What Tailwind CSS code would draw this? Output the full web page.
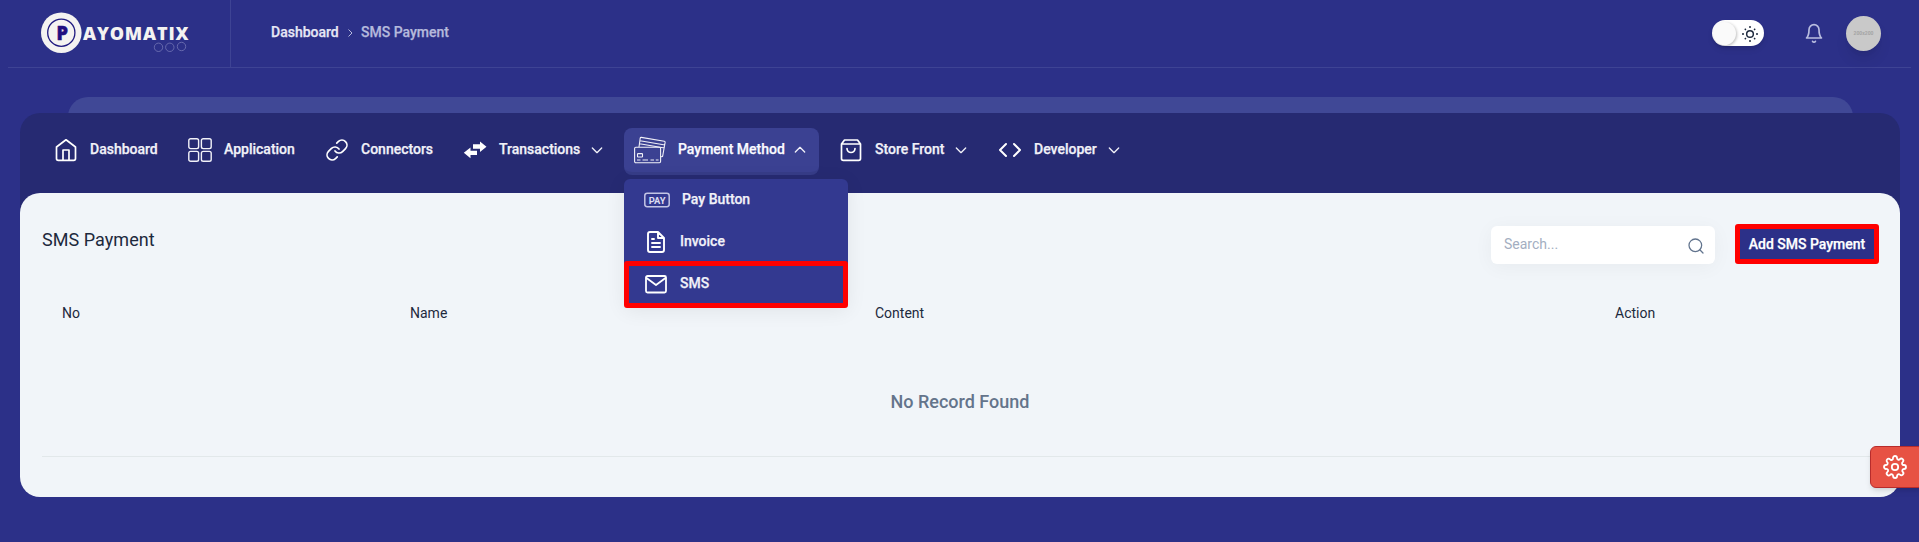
<!DOCTYPE html>
<html lang="en">
<head>
<meta charset="utf-8">
<title>SMS Payment</title>
<script src="https://cdn.jsdelivr.net/npm/@tailwindcss/browser@4"></script>
</head>
<body class="h-[542px] overflow-hidden bg-[#2c3088] font-['Roboto',sans-serif] text-sm leading-5 text-slate-800">
<div class="relative h-[542px] w-[1919px] overflow-hidden">

  <header class="mx-2 flex h-[68px] border-b border-[#3e4394]">
    <div class="flex w-[223px] shrink-0 border-r border-[#3e4394] pl-[33px] pt-3">
      <svg class="h-[42px] w-[150px]" viewBox="0 0 150 42">
        <circle cx="20.3" cy="20.7" r="20.3" fill="#f4f3f1"/>
        <circle cx="20.3" cy="20.7" r="13.6" fill="none" stroke="#1f1a80" stroke-width="1.3"/>
        <text x="15.5" y="28" font-family="Open Sans, sans-serif" font-weight="800" font-size="19.5" fill="#1f0f80" stroke="#1f0f80" stroke-width=".5" textLength="11.5" lengthAdjust="spacingAndGlyphs">P</text>
        <text x="42" y="28" font-family="Open Sans, sans-serif" font-weight="800" font-size="18" fill="#f4f3f1" textLength="105.5" lengthAdjust="spacing">AYOMATIX</text>
        <g fill="none" stroke="#7376b5" stroke-width=".8"><circle cx="117.5" cy="35.3" r="4.2"/><circle cx="128.8" cy="35.3" r="4.2"/><circle cx="140.5" cy="34.5" r="4.2"/></g>
      </svg>
    </div>
    <nav class="flex h-[64px] items-center pl-10 font-medium text-[#b5b9dc] [-webkit-text-stroke:.25px]">
      <span class="w-[68px] whitespace-nowrap text-[#e6e7f5]">Dashboard</span>
      <svg class="mx-[5px] mt-[2px] size-3" viewBox="0 0 24 24" fill="none" stroke="currentColor" stroke-width="2"><path d="m9 19 7-7-7-7"/></svg>
      <span>SMS Payment</span>
    </nav>
    <div class="ml-auto flex h-[66px] items-center pr-[30px]">
      <div class="flex h-[26px] w-[52px] items-center rounded-full bg-white shadow-md">
        <span class="ml-px size-[23px] rounded-full bg-[#fafafa] shadow-[1px_1px_3px_#00000040]"></span>
        <svg class="ml-[6px] mt-[2px] size-4 text-slate-800" viewBox="0 0 24 24" fill="none" stroke="currentColor" stroke-width="2.2"><circle cx="12" cy="12" r="5"/><path d="M12 0v3M12 21v3M4.2 4.2l1.7 1.7M18.1 18.1l1.7 1.7M0 12h3M21 12h3M4.2 19.8l1.7-1.7M18.1 5.9l1.7-1.7"/></svg>
      </div>
      <svg class="ml-10 size-5 text-[#b9bde0]" viewBox="0 0 24 24" fill="none" stroke="currentColor" stroke-width="2" stroke-linecap="round" stroke-linejoin="round"><path d="M18 8A6 6 0 0 0 6 8c0 7-3 10-3 10h18s-3-3-3-10M13.73 22a2 2 0 0 1-3.46 0"/></svg>
      <div class="ml-[22px] flex size-[35px] items-center justify-center rounded-full bg-[#c9c9c9] text-[5px] font-bold text-[#a4a4a4] shadow-lg">200x200</div>
    </div>
  </header>

  <main class="pl-5 pr-[19px] pt-[29px]">
    <div class="mx-[47.5px] h-4 overflow-hidden"><div class="h-10 rounded-[20px] bg-[#404896]"></div></div>
    <section class="rounded-[20px] bg-[#262a72]">
      <nav class="flex h-20 items-start pl-[22px] pt-[15px] font-medium text-[#f1f1f8] [-webkit-text-stroke:.25px]">
        <a class="flex h-[47px] w-[134px] shrink-0 items-center pb-[3px] pl-3">
          <svg class="size-6 text-white" viewBox="0 0 24 24" fill="none" stroke="currentColor" stroke-width="1.7" stroke-linecap="round" stroke-linejoin="round"><path d="M2.5 9 12 1.8 21.5 9v11.5a1.8 1.8 0 0 1-1.8 1.8H4.3a1.8 1.8 0 0 1-1.8-1.8z"/><path d="M9 22V12h6v10"/></svg>
          <span class="ml-3 whitespace-nowrap pb-[2px]">Dashboard</span>
        </a>
        <a class="flex h-[47px] w-[137px] shrink-0 items-center pb-[3px] pl-3">
          <svg class="size-6" viewBox="0 0 24 24" fill="none" stroke="currentColor" stroke-width="1.4"><rect x=".8" y=".8" width="9.8" height="9.8" rx="1.8"/><rect x="13.4" y=".8" width="9.8" height="9.8" rx="1.8"/><rect x=".8" y="13.4" width="9.8" height="9.8" rx="1.8"/><rect x="13.4" y="13.4" width="9.8" height="9.8" rx="1.8"/></svg>
          <span class="ml-3 whitespace-nowrap pb-[2px]">Application</span>
        </a>
        <a class="flex h-[47px] w-[138px] shrink-0 items-center pb-[3px] pl-3">
          <svg class="size-6 text-white" viewBox="0 0 24 24" fill="none" stroke="currentColor" stroke-width="1.7" stroke-linecap="round" stroke-linejoin="round"><path d="M10 13a5 5 0 0 0 7.54.54l3-3a5 5 0 0 0-7.07-7.07l-1.72 1.71"/><path d="M14 11a5 5 0 0 0-7.54-.54l-3 3a5 5 0 0 0 7.07 7.07l1.71-1.71"/></svg>
          <span class="ml-3 whitespace-nowrap pb-[2px]">Connectors</span>
        </a>
        <a class="flex h-[47px] w-[173px] shrink-0 items-center pb-[3px] pl-3">
          <svg class="size-6" viewBox="0 0 24 24" fill="#fff"><path d="M10 6.2h7V3.5l6.5 5.2L17 14v-3.2h-7z"/><path d="M14 12.8v4.2H7.5v3.2L.8 14.8 7.5 9.5v3.3z"/></svg>
          <span class="ml-3 w-[85px] whitespace-nowrap pb-[2px]">Transactions</span>
          <svg class="ml-[5px] size-4" viewBox="0 0 24 24" fill="none" stroke="currentColor" stroke-width="2" stroke-linecap="round" stroke-linejoin="round"><path d="m5 9 7 7 7-7"/></svg>
        </a>
        <a class="flex h-[47px] w-[195px] shrink-0 items-center rounded-lg border-b-[3px] border-[#363c88] bg-[#3b4192] pl-[10px]">
          <svg class="size-8" viewBox="0 0 32 32" fill="none" stroke="currentColor" stroke-width="1.1" stroke-linejoin="round"><rect x=".6" y="13.2" width="26" height="15.6" rx="1.2"/><path d="M5 13 6.2 4.200q.2-.9 1.100-.8l23 3.900q.9.2.8 1.100l-2.400 13.600q-.2.8-1 .7l-1-.2M6 6.700l25 4.300M5.600 9.800l25 4.200"/><rect x="3.500" y="19.600" width="5" height="3.400" rx=".6"/><path d="M3 26h3.500M8.500 26H14M16.500 26H20M21.800 26H24.600"/></svg>
          <span class="ml-3 w-[111px] whitespace-nowrap pb-[2px] text-[#fafaff]">Payment Method</span>
          <svg class="ml-[3px] size-4" viewBox="0 0 24 24" fill="none" stroke="currentColor" stroke-width="2" stroke-linecap="round" stroke-linejoin="round"><path d="m5 15 7-7 7 7"/></svg>
        </a>
        <a class="ml-2 flex h-[47px] w-[159px] shrink-0 items-center pb-[3px] pl-3">
          <svg class="size-6 text-white" viewBox="0 0 24 24" fill="none" stroke="currentColor" stroke-width="1.7" stroke-linecap="round" stroke-linejoin="round"><path d="M2.5 6v14.5a1.8 1.8 0 0 0 1.8 1.8h15.4a1.8 1.8 0 0 0 1.8-1.8V6l-3-4h-13zM2.5 6h19M16 10.5a4 4 0 0 1-8 0"/></svg>
          <span class="ml-3 w-[74px] whitespace-nowrap pb-[2px]">Store Front</span>
          <svg class="ml-[4px] size-4" viewBox="0 0 24 24" fill="none" stroke="currentColor" stroke-width="2" stroke-linecap="round" stroke-linejoin="round"><path d="m5 9 7 7 7-7"/></svg>
        </a>
        <a class="flex h-[47px] shrink-0 items-center pb-[3px] pl-3">
          <svg class="size-6 text-white" viewBox="0 0 24 24" fill="none" stroke="currentColor" stroke-width="2" stroke-linecap="round" stroke-linejoin="round"><path d="m16 18 6-6-6-6M8 6l-6 6 6 6"/></svg>
          <span class="ml-3 w-[65px] whitespace-nowrap pb-[2px]">Developer</span>
          <svg class="ml-[7px] size-4" viewBox="0 0 24 24" fill="none" stroke="currentColor" stroke-width="2" stroke-linecap="round" stroke-linejoin="round"><path d="m5 9 7 7 7-7"/></svg>
        </a>
      </nav>

      <div class="h-[304px] rounded-[20px] bg-[#f1f5f9] px-[22px] pt-[31px]">
        <div class="flex h-[40px]">
          <h1 class="pt-[2px] text-lg leading-7 tracking-[.05px]">SMS Payment</h1>
          <div class="ml-auto mt-[2px] flex h-[38px] w-[224px] items-center rounded-md bg-white pl-[13px] pr-[11px] text-[#a3aec1] shadow-[0_3px_20px_#0000000b]">
            <span class="pb-[2px]">Search...</span>
            <svg class="ml-auto mt-[1px] size-[16px] text-slate-500" viewBox="0 0 24 24" fill="none" stroke="currentColor" stroke-width="1.9" stroke-linecap="round"><circle cx="11" cy="11" r="9.5"/><path d="m22.5 22.5-4.8-4.8"/></svg>
          </div>
          <button class="ml-5 mr-[-1px] h-[40px] w-[144px] whitespace-nowrap rounded-[3px] border-[5px] border-[#ff0000] bg-[#2c3088] text-sm font-medium text-white [-webkit-text-stroke:.25px]">Add SMS Payment</button>
        </div>
        <div class="mt-[39px] grid h-5 grid-cols-[348px_465px_740px_auto] pl-5 text-slate-800">
          <span>No</span><span>Name</span><span>Content</span><span>Action</span>
        </div>
        <div class="flex h-[134px] items-center justify-center border-b border-[#e2e8ea] pt-[35px] text-lg font-medium text-[#64748b]"><span class="-mt-[10px]">No Record Found</span></div>
      </div>
    </section>
  </main>

  <!-- Payment Method menu -->
  <div class="absolute left-[624px] top-[179px] h-[129px] w-[224px] rounded-md bg-[#333990] font-medium text-[#f1f1f8] shadow-[0_3px_20px_#00000012] [-webkit-text-stroke:.25px]">
    <a class="flex h-[41px] items-center pl-5">
      <svg class="size-[26px]" viewBox="0 0 26 26" fill="none"><rect x=".8" y="6.3" width="24.4" height="13.4" rx="2.4" stroke="#c3c5e5" stroke-width="1.5"/><text x="4.7" y="16.6" font-family="Roboto, sans-serif" font-size="9.8" font-weight="700" fill="#dcddf2" textLength="16.8" lengthAdjust="spacingAndGlyphs">PAY</text></svg>
      <span class="ml-3 pb-[2px]">Pay Button</span>
    </a>
    <a class="flex h-[41px] items-center pl-5">
      <svg class="mt-[3px] size-6 text-white" viewBox="0 0 24 24" fill="none" stroke="currentColor" stroke-width="1.9" stroke-linecap="round" stroke-linejoin="round"><path d="M14 2H6a2 2 0 0 0-2 2v16a2 2 0 0 0 2 2h12a2 2 0 0 0 2-2V8zM14 2v6h6M16 13H8M16 17H8M10 9H8"/></svg>
      <span class="ml-3">Invoice</span>
    </a>
    <a class="flex h-[47px] items-center rounded-[3px] border-[5px] border-[#ff0000] pb-[2px] pl-[15px]">
      <svg class="size-6 text-white" viewBox="0 0 24 24" fill="none" stroke="currentColor" stroke-width="1.8" stroke-linecap="round" stroke-linejoin="round"><rect x="2" y="4" width="20" height="16.5" rx="1.5"/><path d="m2.5 6 9.5 7 9.5-7"/></svg>
      <span class="ml-3 pb-[2px]">SMS</span>
    </a>
  </div>

  <!-- Settings tab on the right edge -->
  <button class="absolute left-[1870px] top-[446px] flex h-[42px] w-[54px] items-center rounded-md border border-[#b82c2c] bg-[#e75244] pl-3 text-white shadow-md">
    <svg class="size-6" viewBox="0 0 24 24" fill="none" stroke="currentColor" stroke-width="1.8" stroke-linejoin="round"><circle cx="12" cy="12" r="3.2"/><path d="M19.4 15a1.65 1.65 0 0 0 .33 1.82l.06.06a2 2 0 0 1-2.83 2.83l-.06-.06a1.65 1.65 0 0 0-2.8 1.17V21a2 2 0 0 1-4 0v-.09a1.65 1.65 0 0 0-2.9-1.08l-.06.06a2 2 0 0 1-2.83-2.83l.06-.06A1.65 1.65 0 0 0 3.09 14H3a2 2 0 0 1 0-4h.09a1.65 1.65 0 0 0 1.17-2.8l-.06-.06A2 2 0 0 1 7.03 4.31l.06.06A1.65 1.65 0 0 0 10 3.09V3a2 2 0 0 1 4 0v.09a1.65 1.65 0 0 0 2.8 1.17l.06-.06a2 2 0 0 1 2.83 2.83l-.06.06A1.65 1.65 0 0 0 20.91 10H21a2 2 0 0 1 0 4h-.09a1.65 1.65 0 0 0-1.51 1z"/></svg>
  </button>
</div>
</body>
</html>
